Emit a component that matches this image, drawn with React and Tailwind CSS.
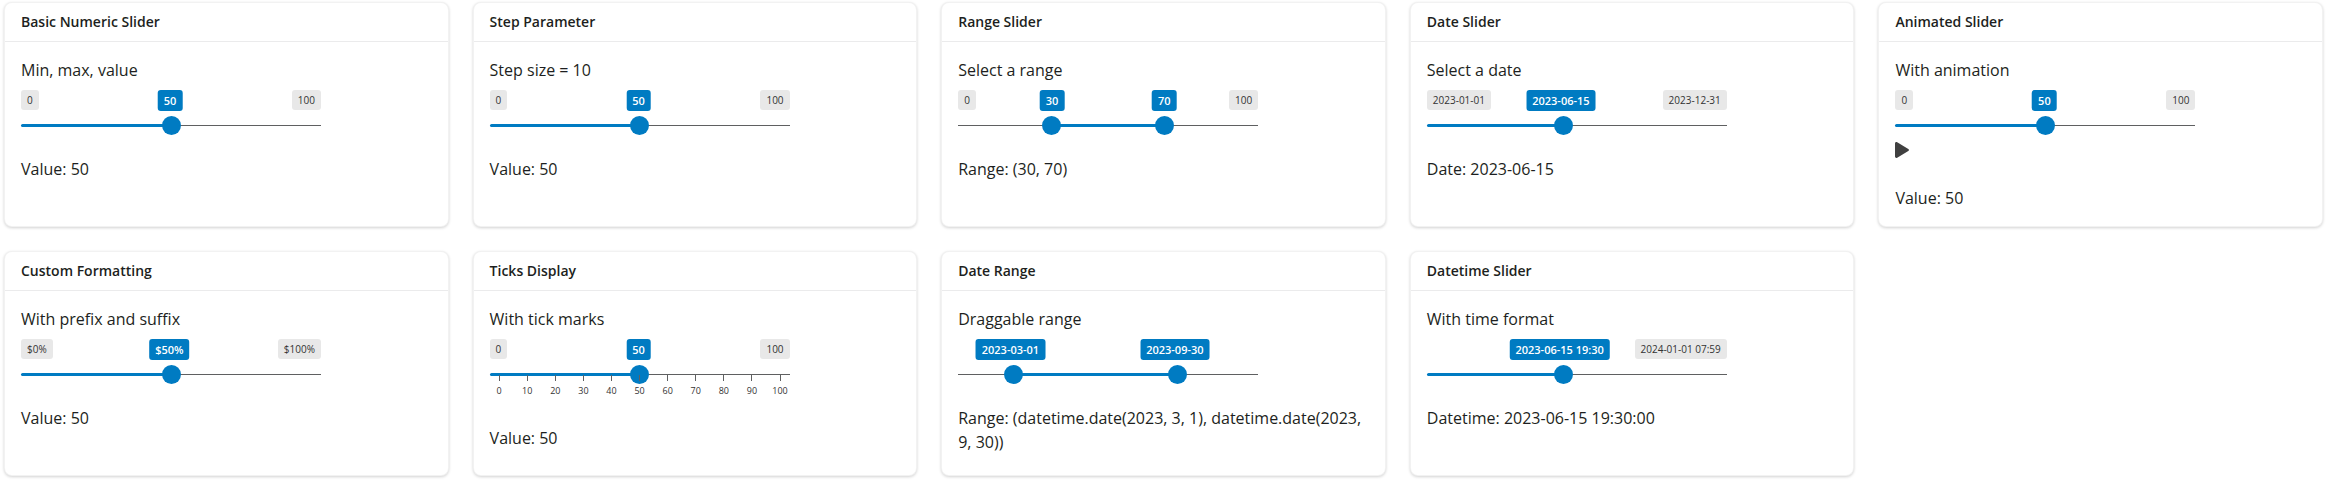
import { useState } from "react";

const THUMB = 19;

const cards = [
  { title: "Basic Numeric Slider", label: "Min, max, value", result: "Value: 50", start: [50], min: "0", max: "100" },
  { title: "Step Parameter", label: "Step size = 10", result: "Value: 50", start: [50], step: 10, min: "0", max: "100" },
  { title: "Range Slider", label: "Select a range", result: "Range: (30, 70)", start: [30, 70], min: "0", max: "100" },
  { title: "Date Slider", label: "Select a date", result: "Date: 2023-06-15", start: [165], limit: 364, min: "2023-01-01", max: "2023-12-31", texts: ["2023-06-15"] },
  { title: "Animated Slider", label: "With animation", result: "Value: 50", start: [50], min: "0", max: "100", animate: true },
  { title: "Custom Formatting", label: "With prefix and suffix", result: "Value: 50", start: [50], min: "$0%", max: "$100%", texts: ["$50%"] },
  { title: "Ticks Display", label: "With tick marks", result: "Value: 50", start: [50], min: "0", max: "100", ticks: [0, 10, 20, 30, 40, 50, 60, 70, 80, 90, 100] },
  { title: "Date Range", label: "Draggable range", result: "Range: (datetime.date(2023, 3, 1), datetime.date(2023, 9, 30))", start: [59, 272], limit: 364, texts: ["2023-03-01", "2023-09-30"] },
  { title: "Datetime Slider", label: "With time format", result: "Datetime: 2023-06-15 19:30:00", start: [165], limit: 364, max: "2024-01-01 07:59", texts: ["2023-06-15 19:30"] },
];

function Slider({ id, card }) {
  const { start, limit = 100, step = 1, min, max, texts, ticks } = card;
  const [values, setValues] = useState(start);
  const at = (v) => `calc(${THUMB / 2}px + (100% - ${THUMB}px) * ${v / limit})`;
  const isRange = values.length === 2;
  const from = isRange ? at(values[0]) : "0px";
  const change = (i, v) =>
    setValues((old) => old.map((o, j) => (j === i ? v : o)));

  return (
    <div className="w-[300px] max-w-full">
      <div className="relative h-[51px]">
        <div className="flex items-start justify-between text-[10px] leading-5 text-[#333]">
          <span className={min ? "rounded-[3px] bg-[#e8e8e8] px-1.5" : ""}>{min}</span>
          <span className={max ? "rounded-[3px] bg-[#e8e8e8] px-1.5" : ""}>{max}</span>
        </div>
        <div className="absolute inset-x-0 top-[35px] h-px bg-[#5f6061]" />
        <div
          className="absolute top-[34px] h-[3px] rounded-l-sm bg-[#007bc2]"
          style={{ left: from, width: `calc(${at(values[values.length - 1])} - ${from})` }}
        />
        {values.map((v, i) => (
          <div key={i}>
            <output
              htmlFor={i === 0 ? id : `${id}-end`}
              className={
                "absolute top-0 rounded-[3px] bg-[#007bc2] px-1.5 text-[11px] leading-[21px] font-semibold whitespace-nowrap text-white " +
                (isRange && !texts ? "-translate-x-1/2" : "-translate-x-[54%]")
              }
              style={{ left: at(v) }}
            >
              {texts && v === start[i] ? texts[i] : v}
            </output>
            <input
              id={i === 0 ? id : `${id}-end`}
              aria-label={i === 0 ? undefined : `${card.label}, end`}
              type="range"
              min={0}
              max={limit}
              step={step}
              value={v}
              onChange={(e) => change(i, Number(e.target.value))}
              className="pointer-events-none absolute inset-x-0 top-[26px] h-[19px] w-full appearance-none bg-transparent [&::-webkit-slider-thumb]:pointer-events-auto [&::-webkit-slider-thumb]:size-[19px] [&::-webkit-slider-thumb]:appearance-none [&::-webkit-slider-thumb]:rounded-full [&::-webkit-slider-thumb]:bg-[#007bc2]"
            />
          </div>
        ))}
        {ticks && (
          <div className="absolute inset-x-0 top-9 flex justify-between px-[9px] text-[9px] leading-3 text-[#333]">
            {ticks.map((t) => (
              <div key={t} className="flex w-px flex-col items-center gap-1">
                <span className="h-1.5 w-px shrink-0 bg-[#5f6061]" />
                <span>{t}</span>
              </div>
            ))}
          </div>
        )}
      </div>
      {ticks && <div className="h-5" />}
    </div>
  );
}

function Card({ card, index }) {
  const id = `slider-${index}`;
  return (
    <section className="flex flex-col rounded-lg border border-black/5 bg-white shadow-[0_1px_3px_rgba(0,0,0,0.18)]">
      <h2 className="border-b border-[#ebebec] px-4 py-2 text-sm leading-[22px] font-semibold">{card.title}</h2>
      <div className="p-4">
        <label htmlFor={id} className="mb-2 block">{card.label}</label>
        <Slider id={id} card={card} />
        {card.animate && (
          <div className="flex h-[29px] items-start">
            <button type="button" aria-label="Play" className="pt-px text-[#404040]">
              <svg viewBox="0 0 14 16" className="h-4 w-3.5" fill="currentColor" aria-hidden="true">
                <path d="M0 1.500C0 .3 1.200-.3 2.200.3L13.300 6.900C14.200 7.400 14.200 8.600 13.300 9.100L2.200 15.700C1.200 16.300 0 15.700 0 14.500Z" />
              </svg>
            </button>
          </div>
        )}
        <p className="mt-4">{card.result}</p>
      </div>
    </section>
  );
}

export default function App() {
  return (
    <main className="grid auto-rows-fr grid-cols-1 gap-6 bg-white px-1 pt-0.5 pb-2 font-['Open_Sans',sans-serif] text-base leading-6 text-[#1d1f21] md:grid-cols-3 xl:grid-cols-5">
      {cards.map((card, i) => (
        <Card key={card.title} card={card} index={i} />
      ))}
    </main>
  );
}
